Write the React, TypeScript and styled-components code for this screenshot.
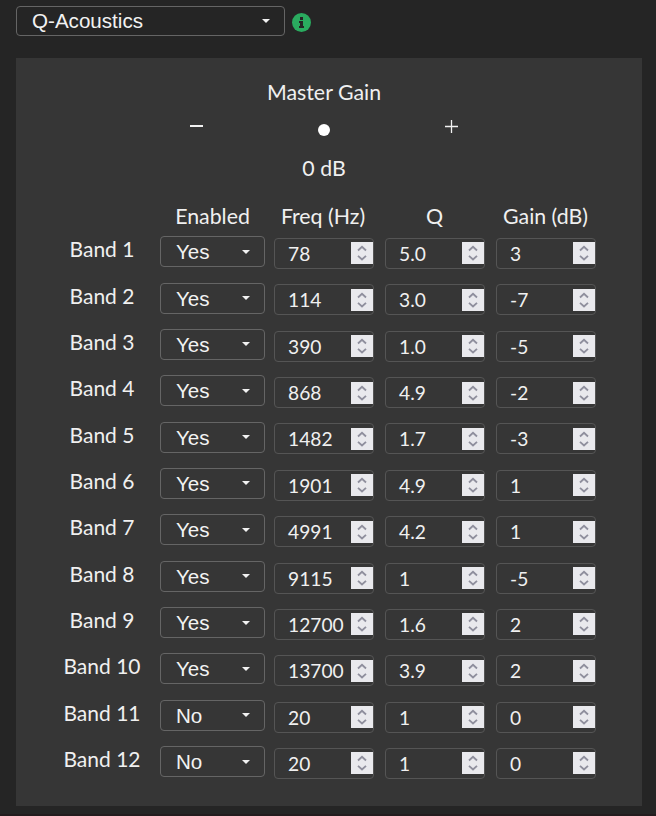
import React from "react";
import styled, { createGlobalStyle } from "styled-components";

const GlobalStyle = createGlobalStyle`
  * { box-sizing: border-box; }
  body { margin: 0; background: #252525; }
`;

const Page = styled.main`
  height: 816px;
  padding: 6px 14px 0 16px;
  background: #252525;
  border-bottom: 2px solid #231c1e;
  color: #f0f0f0;
  font: 21.33px/28px Lato, sans-serif;
  overflow: hidden;
`;

const TopBar = styled.header`
  display: flex;
  align-items: flex-start;
  gap: 7px;
  height: 52px;
`;

const SelectBox = styled.button<{ $width: number; $height?: number }>`
  display: flex;
  align-items: center;
  justify-content: space-between;
  width: ${(p) => p.$width}px;
  height: ${(p) => p.$height ?? 31}px;
  padding: 0 14px 0 15px;
  border: 1px solid #656565;
  border-radius: 4px;
  background: transparent;
  color: #f2f2f2;
  font: 20.6px/28px "Liberation Sans", Arial, sans-serif;
`;

const SelectText = styled.span<{ $drop: number }>`
  padding-top: ${(p) => p.$drop}px;
`;

const Caret = styled.span`
  border: 4.5px solid transparent;
  border-top: 4px solid #f2f2f2;
  border-bottom: 0;
`;

const InfoIcon = styled.svg`
  margin-top: 7px;
`;

const Panel = styled.section`
  height: 748px;
  padding-top: 20px;
  background: #363636;
`;

const Gain = styled.div`
  display: flex;
  flex-direction: column;
  align-items: center;
  width: 616px;
`;

const Slider = styled.div`
  display: grid;
  grid-template-columns: 13px 1fr 13px;
  align-items: center;
  justify-items: center;
  width: 268px;
  height: 48px;
`;

const Knob = styled.span`
  width: 12px;
  height: 12px;
  border-radius: 50%;
  background: #fff;
`;

const Sign = styled.svg`
  margin-bottom: 7px;
`;

const columns = "144px 114px 111px 111px 100px";

const Heading = styled.div`
  display: grid;
  grid-template-columns: ${columns};
  height: 34.2px;
  margin-top: 20px;
`;

const HeadingText = styled.span<{ $width: number }>`
  width: ${(p) => p.$width}px;
  text-align: center;
  white-space: nowrap;
`;

const BandRow = styled.div`
  display: grid;
  grid-template-columns: ${columns};
  align-items: start;
  height: 46.36px;
`;

const BandLabel = styled.span`
  margin-top: -1px;
  padding-left: 28px;
  font-size: 21px;
  text-align: center;
`;

const NumberBox = styled.div`
  display: flex;
  align-items: center;
  justify-content: space-between;
  width: 100px;
  height: 31px;
  margin-top: 1.8px;
  padding: 0 0 0 13px;
  border: 1px solid #555;
  border-radius: 4px;
  font-size: 19.2px;
  line-height: 29px;
`;

const Value = styled.span`
  padding-top: 0;
`;

const Stepper = styled.span`
  display: flex;
  width: 22px;
  height: 22px;
  background: #e9e9ed;
`;

type Band = [enabled: string, freq: string, q: string, gain: string];

const bands: Band[] = [
  ["Yes", "78", "5.0", "3"],
  ["Yes", "114", "3.0", "-7"],
  ["Yes", "390", "1.0", "-5"],
  ["Yes", "868", "4.9", "-2"],
  ["Yes", "1482", "1.7", "-3"],
  ["Yes", "1901", "4.9", "1"],
  ["Yes", "4991", "4.2", "1"],
  ["Yes", "9115", "1", "-5"],
  ["Yes", "12700", "1.6", "2"],
  ["Yes", "13700", "3.9", "2"],
  ["No", "20", "1", "0"],
  ["No", "20", "1", "0"],
];

const NumberField = ({ value }: { value: string }) => (
  <NumberBox>
    <Value>{value}</Value>
    <Stepper>
      <svg width="22" height="22" fill="none" stroke="#8f8f9d" strokeWidth="1.8">
        <path d="M7 8.5 11 4.8 15 8.5M7 13.8 11 17.5 15 13.8" />
      </svg>
    </Stepper>
  </NumberBox>
);

export default function App() {
  return (
    <>
      <GlobalStyle />
      <Page>
        <TopBar>
          <SelectBox $width={269} $height={30}>
            <SelectText $drop={0}>Q-Acoustics</SelectText>
            <Caret />
          </SelectBox>
          <InfoIcon width="19" height="19" viewBox="0 0 19 19">
            <circle cx="9.5" cy="9.5" r="9.5" fill="#2aab5f" />
            <path d="M8 4h3v3H8zM7 8h4v5h1v2H7v-2h1v-3H7z" fill="#252525" />
          </InfoIcon>
        </TopBar>
        <Panel>
          <Gain>
            <span>Master Gain</span>
            <Slider>
              <Sign width="13" height="13" stroke="#f2f2f2" strokeWidth="2">
                <path d="M0 6h13" />
              </Sign>
              <Knob />
              <Sign width="13" height="13" stroke="#f2f2f2" strokeWidth="1.3">
                <path d="M0 6.5h13M6.5 0v13" />
              </Sign>
            </Slider>
            <span>0 dB</span>
          </Gain>
          <Heading>
            <span />
            <HeadingText $width={105}>Enabled</HeadingText>
            <HeadingText $width={98}>Freq (Hz)</HeadingText>
            <HeadingText $width={99}>Q</HeadingText>
            <HeadingText $width={99}>Gain (dB)</HeadingText>
          </Heading>
          {bands.map(([enabled, freq, q, gain], i) => (
            <BandRow key={i}>
              <BandLabel>Band {i + 1}</BandLabel>
              <SelectBox $width={105}>
                <SelectText $drop={1}>{enabled}</SelectText>
                <Caret />
              </SelectBox>
              <NumberField value={freq} />
              <NumberField value={q} />
              <NumberField value={gain} />
            </BandRow>
          ))}
        </Panel>
      </Page>
    </>
  );
}
